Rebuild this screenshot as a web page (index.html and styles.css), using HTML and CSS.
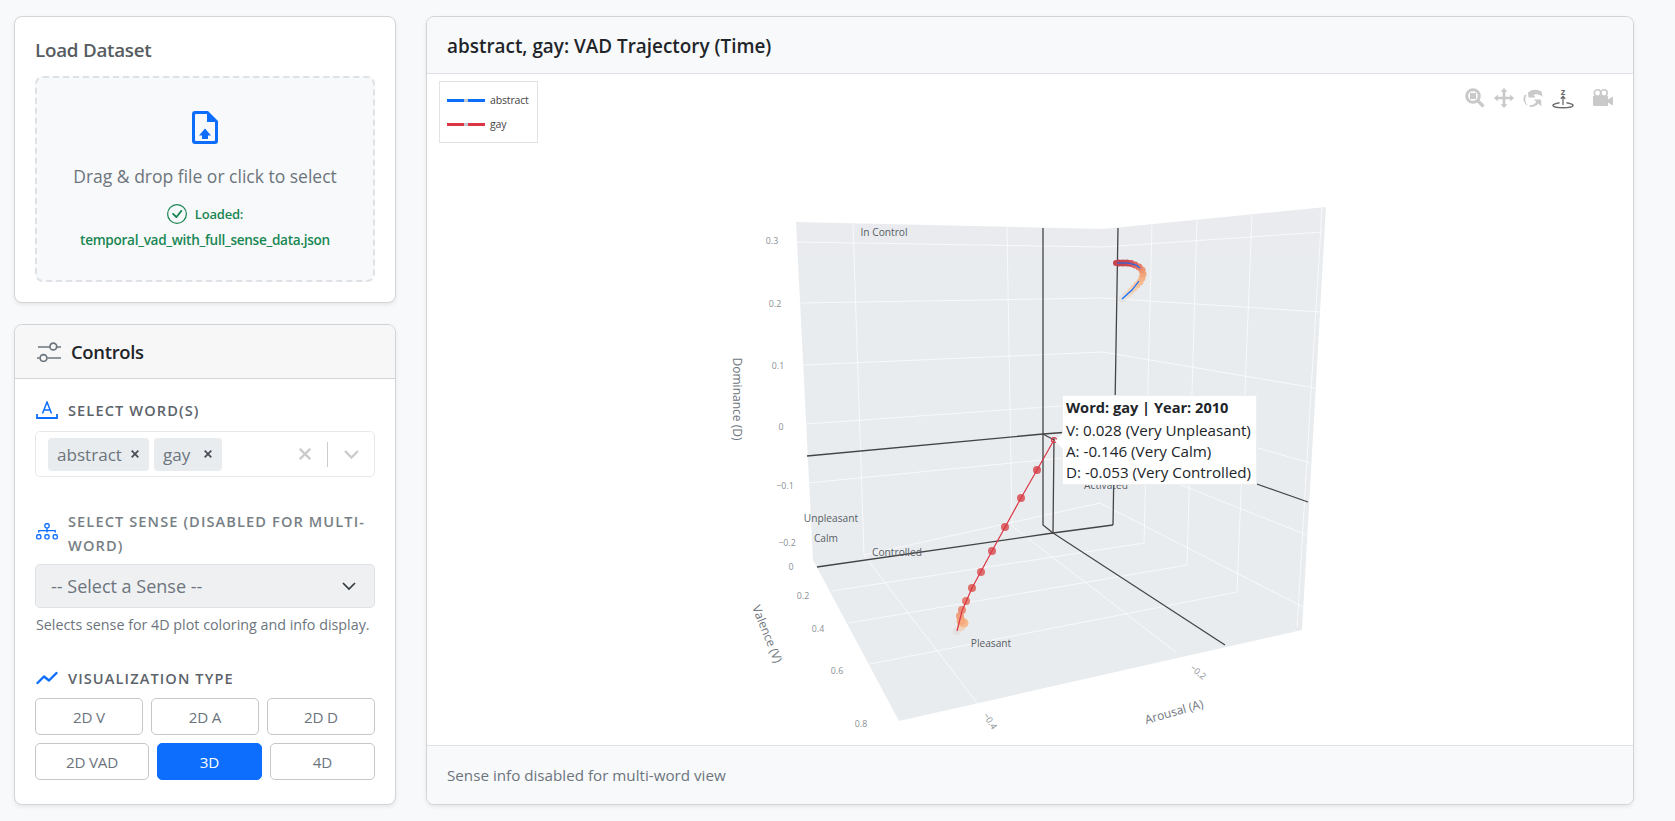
FILE: index.html
```html
<!DOCTYPE html>
<html lang="en">
<head>
    <meta charset="UTF-8">
    <meta name="viewport" content="width=device-width, initial-scale=1.0">
    <title>VAD Trajectory Explorer</title>
    <link rel="stylesheet" href="styles.css">
</head>
<body>
    <div class="layout">
        <div class="sidebar">
            <div class="card load-card">
                <h5 class="load-title">Load Dataset</h5>
                <div class="dropzone">
                    <svg class="file-icon" width="26" height="33" viewBox="0 0 26 33">
                        <path fill="#0d6efd" fill-rule="evenodd" d="M3 0H16L26 10V30a3 3 0 0 1-3 3H3a3 3 0 0 1-3-3V3a3 3 0 0 1 3-3zM4 3a1 1 0 0 0-1 1V29a1 1 0 0 0 1 1H22a1 1 0 0 0 1-1V11H15V3z"/>
                        <path fill="#0d6efd" d="M7 24.500L13 17.500L19 24.500H16V28H10V24.500z"/>
                    </svg>
                    <p class="drop-text">Drag &amp; drop file or click to select</p>
                    <div class="loaded-line">
                        <svg width="20" height="20" viewBox="0 0 16 16" fill="#198754">
                            <path d="M8 15A7 7 0 1 1 8 1a7 7 0 0 1 0 14zm0 1A8 8 0 1 0 8 0a8 8 0 0 0 0 16z"/>
                            <path d="M10.970 4.970a.235.235 0 0 0-.02.022L7.477 9.417 5.384 7.323a.75.75 0 0 0-1.060 1.060L6.970 11.030a.75.75 0 0 0 1.079-.02l3.992-4.990a.75.75 0 0 0-1.071-1.050z"/>
                        </svg>
                        <span>Loaded:</span>
                    </div>
                    <div class="loaded-file">temporal_vad_with_full_sense_data.json</div>
                </div>
            </div>

            <div class="card controls-card">
                <div class="controls-header">
                    <svg width="24" height="20" viewBox="0 0 24 20" fill="none" stroke="#6c757d" stroke-width="1.700">
                        <path d="M1 5H12.500M20 5H24"/>
                        <circle cx="16.300" cy="4.500" r="3.400"/>
                        <path d="M0 16H2.500M10.500 16H24"/>
                        <circle cx="6.500" cy="16" r="3.400"/>
                    </svg>
                    <span>Controls</span>
                </div>
                <div class="controls-body">
                    <div class="field field-words">
                        <label class="field-label">
                            <svg width="22" height="18" viewBox="0 0 22 18" fill="none" stroke="#0d6efd" stroke-width="1.500">
                                <path d="M6.500 12.500L11 1L15.500 12.500M8 9H14"/>
                                <path stroke-width="1.800" d="M1 13V17H21V13"/>
                            </svg>
                            <span>Select Word(s)</span>
                        </label>
                        <div class="multi-select">
                            <div class="tag">
                                <span>abstract</span>
                                <svg width="8" height="8" viewBox="0 0 8 8" stroke="#495057" stroke-width="1.800"><path d="M.7 .7L7.300 7.300M7.300 .7L.7 7.300"/></svg>
                            </div>
                            <div class="tag tag-short">
                                <span>gay</span>
                                <svg width="8" height="8" viewBox="0 0 8 8" stroke="#495057" stroke-width="1.800"><path d="M.7 .7L7.300 7.300M7.300 .7L.7 7.300"/></svg>
                            </div>
                            <div class="multi-actions">
                                <svg width="12" height="12" viewBox="0 0 12 12" stroke="#cccccc" stroke-width="2.400"><path d="M.8 .8L11.200 11.200M11.200 .8L.8 11.200"/></svg>
                                <span class="multi-sep"></span>
                                <svg width="15" height="9" viewBox="0 0 15 9" fill="none" stroke="#cccccc" stroke-width="2.400"><path d="M1 1L7.500 7.500L14 1"/></svg>
                            </div>
                        </div>
                    </div>

                    <div class="field field-sense">
                        <label class="field-label field-label-muted">
                            <svg width="22" height="20" viewBox="0 0 16 14.500" fill="#0d6efd">
                                <path d="M6 1.500A1.500 1.500 0 0 1 7.500 0h1A1.500 1.500 0 0 1 10 1.500v1A1.500 1.500 0 0 1 8.500 4v1H14a.5.5 0 0 1 .5.5v1a.5.5 0 0 1-1 0V6h-5v.5a.5.5 0 0 1-1 0V6h-5v.5a.5.5 0 0 1-1 0v-1A.5.5 0 0 1 2 5h5.500V4A1.500 1.500 0 0 1 6 2.500v-1zM8.500 3a.5.5 0 0 0 .5-.5v-1a.5.5 0 0 0-.5-.5h-1a.5.5 0 0 0-.5.5v1a.5.5 0 0 0 .5.5h1zM0 9.500A1.500 1.500 0 0 1 1.500 8h1A1.500 1.500 0 0 1 4 9.500v1A1.500 1.500 0 0 1 2.500 12h-1A1.500 1.500 0 0 1 0 10.500v-1zm1.500-.5a.5.5 0 0 0-.5.5v1a.5.5 0 0 0 .5.5h1a.5.5 0 0 0 .5-.5v-1a.5.5 0 0 0-.5-.5h-1zm4.500.5A1.500 1.500 0 0 1 7.500 8h1a1.500 1.500 0 0 1 1.500 1.500v1A1.500 1.500 0 0 1 8.500 12h-1A1.500 1.500 0 0 1 6 10.500v-1zm1.500-.5a.5.5 0 0 0-.5.5v1a.5.5 0 0 0 .5.5h1a.5.5 0 0 0 .5-.5v-1a.5.5 0 0 0-.5-.5h-1zm4.500.5a1.500 1.500 0 0 1 1.500-1.500h1a1.500 1.500 0 0 1 1.500 1.500v1a1.500 1.500 0 0 1-1.500 1.500h-1a1.500 1.500 0 0 1-1.500-1.500v-1zm1.500-.5a.5.5 0 0 0-.5.5v1a.5.5 0 0 0 .5.5h1a.5.5 0 0 0 .5-.5v-1a.5.5 0 0 0-.5-.5h-1z"/>
                            </svg>
                            <span>Select Sense (disabled for multi-word)</span>
                        </label>
                        <div class="sense-select">
                            <span>-- Select a Sense --</span>
                            <svg width="14" height="9" viewBox="0 0 14 9" fill="none" stroke="#343a40" stroke-width="1.700"><path d="M1 1L7 7L13 1"/></svg>
                        </div>
                        <div class="help-text">Selects sense for 4D plot coloring and info display.</div>
                    </div>

                    <div class="field">
                        <label class="field-label">
                            <svg width="22" height="14" viewBox="0 0 22 14" fill="#0d6efd" stroke="#0d6efd" stroke-width="2.400" stroke-linecap="round" stroke-linejoin="round">
                                <path fill="none" d="M1.500 12L8 5.500L13 9.500L20.500 2"/>
                            </svg>
                            <span>Visualization Type</span>
                        </label>
                        <div class="btn-row btn-row-even">
                            <button class="viz-btn">2D V</button>
                            <button class="viz-btn">2D A</button>
                            <button class="viz-btn">2D D</button>
                        </div>
                        <div class="btn-row btn-row-wide">
                            <button class="viz-btn">2D VAD</button>
                            <button class="viz-btn viz-btn-active">3D</button>
                            <button class="viz-btn">4D</button>
                        </div>
                    </div>
                </div>
            </div>
        </div>

        <div class="card main-card">
            <div class="main-header">abstract, gay: VAD Trajectory (Time)</div>
            <div class="plot">
                <svg class="plot-svg" viewBox="427 74 1206 671" preserveAspectRatio="none">
                    <!-- scene walls and floor -->
                    <polygon fill="#e9ecef" points="796,222 1103,229 1326,207 1302,630 899,721 813,560"/>

                    <!-- grid -->
                    <g fill="none" stroke="#ffffff" stroke-width="0.800" opacity="0.850">
                        <path d="M797,242 L1103,247 L1323,232"/>
                        <path d="M801,303 L1103,298 L1320,312"/>
                        <path d="M803,365 L1103,352 L1315,388"/>
                        <path d="M806,424 L1103,403 L1310,463"/>
                        <path d="M808,483 L1103,454 L1307,535"/>
                        <path d="M864,555 L1100,503 L1303,607"/>
                        <path d="M853,224 L864,555 L977,703"/>
                        <path d="M1007,227 L1012,526 L1177,653"/>
                        <path d="M1152,225 L1144,543"/>
                        <path d="M1197,220 L1187,565"/>
                        <path d="M1252,215 L1237,592"/>
                        <path d="M1322,208 L1297,627"/>
                        <path d="M832,591 L1144,543"/>
                        <path d="M849,623 L1187,565"/>
                        <path d="M870,664 L1237,592"/>
                    </g>

                    <!-- hover spikes -->
                    <g fill="none" stroke="#444444" stroke-width="1.300">
                        <path d="M1043,228 L1043,525 L1053,533"/>
                        <path d="M1118,228 L1113,525"/>
                        <path d="M817,567 L1053,533 L1113,525"/>
                        <path d="M1054,438 L1053,533 L1225,645"/>
                        <path d="M807,456 L1043,434 L1070,432"/>
                        <path d="M1043,434 L1054,440"/>
                        <path d="M1200,464 L1308,502"/>
                    </g>

                    <!-- abstract -->
                    <g>
                        <circle cx="1122" cy="299" r="3.500" fill="#e4e3e3"/>
                        <circle cx="1125" cy="296" r="3.500" fill="#e8dfda"/>
                        <circle cx="1128" cy="294" r="3.500" fill="#efdacb"/>
                        <circle cx="1131" cy="291" r="3.500" fill="#f3d4bd"/>
                        <circle cx="1134" cy="288" r="3.500" fill="#f5cdb0"/>
                        <circle cx="1137" cy="285" r="3.500" fill="#f6c5a1"/>
                        <circle cx="1140" cy="282" r="3.500" fill="#f6bc92"/>
                        <circle cx="1142" cy="278" r="3.500" fill="#f5b185"/>
                        <circle cx="1143" cy="274" r="3.500" fill="#f2a67c"/>
                        <circle cx="1142" cy="270" r="3.500" fill="#ec9672"/>
                        <circle cx="1139" cy="267" r="3.500" fill="#e47f69"/>
                        <circle cx="1135" cy="265" r="3.500" fill="#db6a61"/>
                        <circle cx="1131" cy="263.500" r="3.500" fill="#d2565a"/>
                        <circle cx="1127" cy="263" r="3.500" fill="#cb4a53"/>
                        <circle cx="1123" cy="263" r="3.500" fill="#c8464f"/>
                        <circle cx="1119" cy="263" r="3.500" fill="#c7434d"/>
                        <circle cx="1116" cy="263" r="3" fill="#c7434d"/>
                        <path fill="none" stroke="#0d6efd" stroke-width="1.200" d="M1117,263 L1128,263 L1136,265 L1140,268"/>
                        <path fill="none" stroke="#0d6efd" stroke-width="1.200" d="M1122,299 L1132,290 L1139,281"/>
                    </g>

                    <!-- gay -->
                    <g>
                        <circle cx="957" cy="631" r="4" fill="#e3e1e1"/>
                        <circle cx="961" cy="627" r="4" fill="#f0d2bd"/>
                        <circle cx="964" cy="623" r="4.500" fill="#f5b98f"/>
                        <circle cx="961" cy="621" r="4.500" fill="#f5ab7e"/>
                        <circle cx="960" cy="616" r="4" fill="#f0a07d"/>
                        <circle cx="962" cy="610" r="4" fill="#e98f77"/>
                        <circle cx="966" cy="601" r="4" fill="#e37f70"/>
                        <circle cx="972" cy="588" r="4" fill="#dd7068"/>
                        <circle cx="981" cy="572" r="4" fill="#dc6d6c"/>
                        <circle cx="992" cy="551" r="4" fill="#db696b"/>
                        <circle cx="1005" cy="527" r="4" fill="#da6669"/>
                        <circle cx="1021" cy="498" r="4" fill="#da6568"/>
                        <circle cx="1037" cy="470" r="4" fill="#d96066"/>
                        <path fill="none" stroke="#dc3545" stroke-width="1.200" d="M1054,440 L1037,470 L1021,498 L992,551 L972,588 L962,611 L957,631"/>
                        <circle cx="1054" cy="440" r="2.500" fill="none" stroke="#dc3545" stroke-width="1.200"/>
                    </g>

                    <!-- tick labels -->
                    <g class="tick-labels">
                        <text x="772" y="244">0.3</text>
                        <text x="775" y="307">0.2</text>
                        <text x="778" y="369">0.1</text>
                        <text x="781" y="430">0</text>
                        <text x="785" y="489">−0.1</text>
                        <text x="787" y="546">−0.2</text>
                        <text x="791" y="570">0</text>
                        <text x="803" y="599">0.2</text>
                        <text x="818" y="632">0.4</text>
                        <text x="837" y="674">0.6</text>
                        <text x="861" y="727">0.8</text>
                        <text transform="translate(990,721) rotate(58)" y="3">−0.4</text>
                        <text transform="translate(1198,672) rotate(40)" y="3">−0.2</text>
                    </g>

                    <!-- axis titles -->
                    <g class="axis-titles">
                        <text transform="translate(737,399) rotate(90)" y="4">Dominance (D)</text>
                        <text transform="translate(767,634) rotate(68)" y="4">Valence (V)</text>
                        <text transform="translate(1174,712) rotate(-16)" y="4">Arousal (A)</text>
                    </g>

                    <!-- annotations -->
                    <g class="annotations">
                        <text x="884" y="236">In Control</text>
                        <text x="831" y="522">Unpleasant</text>
                        <text x="826" y="542">Calm</text>
                        <text x="897" y="556">Controlled</text>
                        <text x="991" y="647">Pleasant</text>
                        <text x="1106" y="489">Activated</text>
                    </g>
                </svg>

                <div class="legend">
                    <div class="legend-row">
                        <span class="legend-line legend-blue"><i></i></span>
                        <span>abstract</span>
                    </div>
                    <div class="legend-row">
                        <span class="legend-line legend-red"><i></i></span>
                        <span>gay</span>
                    </div>
                </div>

                <div class="modebar">
                    <svg class="mode-icon" width="20" height="20" viewBox="0 0 20 20" fill="none" stroke="#c9c9c9">
                        <circle cx="8" cy="8" r="6.300" stroke-width="3"/>
                        <rect x="5" y="5" width="6" height="6" fill="#c9c9c9" stroke="none"/>
                        <path d="M12.500 12.500L18.500 18.500" stroke-width="3.200"/>
                    </svg>
                    <svg class="mode-icon" width="20" height="20" viewBox="0 0 20 20" fill="#c9c9c9">
                        <path d="M10 0L13.500 3.800H11.300V8.700H16.200V6.500L20 10L16.200 13.500V11.300H11.300V16.200H13.500L10 20L6.500 16.200H8.700V11.300H3.800V13.500L0 10L3.800 6.500V8.700H8.700V3.800H6.500z"/>
                    </svg>
                    <svg class="mode-icon" width="20" height="20" viewBox="0 0 20 20" fill="#c9c9c9">
                        <path d="M5 4.500C8 1.500 13 .5 18.500 3.500L19.500 9C17 6 13 5.500 10.500 7L12.500 9.500L5.500 9.500z"/>
                        <path d="M1.500 7L3.500 6.500C1.500 10.500 2 14 4.500 17.500C2 16.500 .3 13 .5 10z"/>
                        <path d="M15.500 15.500C13 18.500 8.500 19.500 6 18.500L7.500 17C10 17.500 12.500 16 13 13.500L11 11.500H18L18.500 18.500z"/>
                    </svg>
                    <svg class="mode-icon mode-icon-active" width="22" height="25" viewBox="0 -3 22 25" fill="none" stroke="#6b6b6b">
                        <text class="mode-z" x="11" y="7.500">z</text>
                        <path d="M11 18V9.500M8.800 11.800L11 9.300L13.200 11.800" stroke-width="1.300"/>
                        <path d="M7.500 15.800C3 16.500 1 17.500 1 18.500C1 19.800 5.500 20.800 11 20.800C16.500 20.800 21 19.800 21 18.500C21 17.500 19 16.500 14.500 15.800" stroke-width="1.500"/>
                    </svg>
                    <svg class="mode-icon mode-camera" width="20" height="18" viewBox="0 0 20 18" fill="#c9c9c9">
                        <circle cx="4.500" cy="4" r="3.200" fill="none" stroke="#c9c9c9" stroke-width="1.600"/>
                        <circle cx="11" cy="4" r="3.200" fill="none" stroke="#c9c9c9" stroke-width="1.600"/>
                        <rect x="0" y="7" width="15" height="10" rx="1"/>
                        <path d="M15 10.500L20 7.500V16.500L15 13.500z"/>
                    </svg>
                </div>

                <div class="hover-tip">
                    <div class="hover-title">Word: gay | Year: 2010</div>
                    <div>V: 0.028 (Very Unpleasant)</div>
                    <div>A: -0.146 (Very Calm)</div>
                    <div>D: -0.053 (Very Controlled)</div>
                </div>
            </div>
            <div class="main-footer">Sense info disabled for multi-word view</div>
        </div>
    </div>
</body>
</html>
```

FILE: styles.css
```css
* {
    box-sizing: border-box;
}

body {
    margin: 0;
    height: 821px;
    background-color: #f8f9fa;
    font-family: "Open Sans", "Noto Sans", sans-serif;
    color: #212529;
    overflow: hidden;
}

.layout {
    display: flex;
    gap: 30px;
    height: 100%;
    padding: 16px 41px 16px 14px;
}

.sidebar {
    width: 382px;
    flex-shrink: 0;
    display: flex;
    flex-direction: column;
    gap: 21px;
}

.card {
    background: white;
    border: 1px solid #d3d4d6;
    border-radius: 8px;
    box-shadow: 0 2px 4px rgba(0,0,0,0.075);
    overflow: hidden;
}

/* Load dataset */
.load-card {
    height: 287px;
    padding: 20px 20px 20px 20px;
}

.load-title {
    margin: 0 0 15px 0;
    height: 24px;
    padding-top: 1px;
    font-size: 18.8px;
    line-height: 24px;
    font-weight: 600;
    letter-spacing: -0.25px;
    color: #575c61;
}

.dropzone {
    height: 206px;
    border: 2px dashed #dee2e6;
    border-radius: 8px;
    background-color: #f8f9fa;
    display: flex;
    flex-direction: column;
    align-items: center;
    padding-top: 33px;
}

.file-icon {
    display: block;
}

.drop-text {
    margin: 19px 0 0 0;
    font-size: 17.5px;
    line-height: 26px;
    color: #6c757d;
}

.loaded-line {
    display: flex;
    align-items: center;
    gap: 8px;
    margin-top: 15px;
    height: 20px;
    font-size: 13px;
    font-weight: 600;
    letter-spacing: -0.2px;
    color: #198754;
}

.loaded-file {
    margin-top: 6px;
    font-size: 13.6px;
    line-height: 20px;
    font-weight: 600;
    letter-spacing: -0.3px;
    color: #198754;
}

/* Controls */
.controls-card {
    flex: 1;
}

.controls-header {
    height: 54px;
    background-color: #f7f7f7;
    border-bottom: 1px solid #d3d4d6;
    display: flex;
    align-items: center;
    gap: 10px;
    padding: 0 0 0 22px;
    font-size: 18.4px;
    font-weight: 600;
    letter-spacing: -0.3px;
}

.controls-body {
    padding: 19px 20px 0 20px;
}

.field-words {
    height: 111px;
}

.field-sense {
    height: 157px;
}

.field-label {
    display: flex;
    align-items: center;
    gap: 10px;
    margin-bottom: 8px;
    font-size: 14.6px;
    line-height: 24px;
    font-weight: 600;
    letter-spacing: 1.1px;
    text-transform: uppercase;
    color: #5c636a;
}

.field-label svg {
    flex-shrink: 0;
    margin-left: 1px;
}

.field-words .field-label {
    margin-bottom: 9px;
}

.field-label-muted {
    margin-bottom: 7px;
    color: #777f86;
}

.multi-select {
    height: 46px;
    border: 1px solid #e8e8e8;
    border-radius: 5px;
    display: flex;
    align-items: center;
    padding: 0 0 0 12px;
    gap: 5px;
}

.tag {
    width: 101px;
    height: 33px;
    border-radius: 4px;
    background-color: #e9ecef;
    display: flex;
    align-items: center;
    justify-content: space-between;
    padding: 0 10px 0 9px;
    font-size: 17.1px;
    color: #6c757d;
}

.tag-short {
    width: 68px;
}

.multi-actions {
    margin-left: auto;
    width: 75px;
    display: flex;
    align-items: center;
    justify-content: space-between;
    padding-right: 15px;
}

.multi-sep {
    width: 1px;
    height: 25px;
    background-color: #cccccc;
}

.sense-select {
    height: 44px;
    border: 1px solid #dee2e6;
    border-radius: 5px;
    background-color: #eff0f2;
    display: flex;
    align-items: center;
    justify-content: space-between;
    padding: 0 18px 0 15px;
    font-size: 18px;
    color: #6c757d;
}

.help-text {
    margin: 7px 0 0 1px;
    font-size: 14.3px;
    line-height: 20px;
    color: #6c757d;
    white-space: nowrap;
}

.btn-row {
    display: grid;
    gap: 8px;
    margin-bottom: 8px;
}

.btn-row-even {
    grid-template-columns: repeat(3, 1fr);
}

.btn-row-wide {
    grid-template-columns: 114px 1fr 1fr;
}

.viz-btn {
    height: 37px;
    padding: 0;
    background: white;
    border: 1px solid #c4c6c8;
    border-radius: 5px;
    font-family: inherit;
    font-size: 15.2px;
    letter-spacing: -0.2px;
    color: #6c757d;
}

.viz-btn-active {
    background-color: #0d6efd;
    border-color: #0d6efd;
    color: white;
}

/* Main plot card */
.main-card {
    flex: 1;
    display: flex;
    flex-direction: column;
}

.main-header {
    height: 57px;
    flex-shrink: 0;
    background-color: #f8f9fa;
    border-bottom: 1px solid #dee2e6;
    display: flex;
    align-items: center;
    padding: 2px 0 0 20px;
    font-size: 18.9px;
    font-weight: 600;
}

.plot {
    position: relative;
    flex: 1;
    min-height: 0;
}

.plot-svg {
    display: block;
    width: 100%;
    height: 100%;
}

.tick-labels text {
    font-family: "Open Sans", sans-serif;
    font-size: 8.8px;
    fill: #8a8f94;
    text-anchor: middle;
}

.axis-titles text {
    font-family: "Open Sans", sans-serif;
    font-size: 12px;
    fill: #6f767d;
    text-anchor: middle;
}

.annotations text {
    font-family: "Open Sans", sans-serif;
    font-size: 10.2px;
    fill: #585e64;
    text-anchor: middle;
}

.legend {
    position: absolute;
    left: 12px;
    top: 7px;
    width: 99px;
    height: 62px;
    border: 1px solid #e3e3e3;
    background: white;
    display: flex;
    flex-direction: column;
    justify-content: center;
    gap: 5px;
    padding-left: 7px;
    font-size: 10.5px;
    letter-spacing: -0.15px;
    color: #444444;
}

.legend-row {
    display: flex;
    align-items: center;
    gap: 5px;
    height: 19px;
}

.legend-line {
    width: 38px;
    height: 3px;
    display: flex;
    justify-content: center;
}

.legend-line i {
    width: 4px;
    background-color: #c3c6cc;
}

.legend-blue {
    background-color: #0d6efd;
}

.legend-red {
    background-color: #dc3545;
}

.modebar {
    position: absolute;
    top: 10px;
    left: 1038px;
    display: flex;
    align-items: center;
    gap: 9px;
}

.mode-icon-active {
    margin-bottom: 3px;
}

.mode-camera {
    margin-left: 10px;
}

.mode-z {
    font-family: "Open Sans", sans-serif;
    font-size: 9.5px;
    font-weight: 700;
    fill: #6b6b6b;
    stroke: none;
    text-anchor: middle;
}

.hover-tip {
    position: absolute;
    left: 635px;
    top: 321px;
    width: 195px;
    height: 90px;
    background: white;
    border: 1px solid #eeeeee;
    padding: 1px 0 0 3px;
    font-size: 15.2px;
    line-height: 21px;
    white-space: nowrap;
}

.hover-tip::before {
    content: "";
    position: absolute;
    left: -8px;
    top: 37px;
    border-top: 8px solid transparent;
    border-bottom: 8px solid transparent;
    border-right: 8px solid white;
}

.hover-title {
    margin-bottom: 1.500px;
    font-size: 14.6px;
    font-weight: 700;
}

.main-footer {
    height: 59px;
    flex-shrink: 0;
    background-color: #f8f9fa;
    border-top: 1px solid #dee2e6;
    display: flex;
    align-items: center;
    padding-left: 20px;
    font-size: 15.2px;
    color: #6c757d;
}
```
